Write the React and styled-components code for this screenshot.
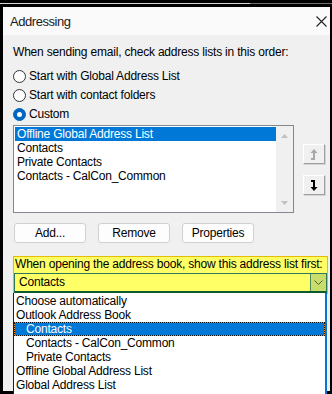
import React from "react";
import styled, { createGlobalStyle } from "styled-components";

const Global = createGlobalStyle`
  html, body { margin: 0; padding: 0; background: #000; }
  #root { width: 332px; height: 394px; overflow: hidden; }
  * { box-sizing: border-box; }
`;

const Screen = styled.div`
  width: 332px;
  height: 394px;
  background: #000;
  display: flex;
  flex-direction: column;
  overflow: hidden;
  font-family: "Liberation Sans", Arial, sans-serif;
  font-size: 12px;
  letter-spacing: -0.2px;
  color: #000;
`;

const TopStrip = styled.div`
  height: 7px;
  flex: none;
  padding-top: 3px;
`;

const TopLine = styled.div`
  height: 1px;
  background: linear-gradient(to right, #d8d8d8 0, #d8d8d8 250px, #6e6e6e 250px);
`;

const Frame = styled.div`
  flex: 1;
  display: flex;
  padding: 0 2px 3px 3px;
  min-height: 0;
`;

const Dialog = styled.div`
  flex: 1;
  background: #f0f0f0;
  display: flex;
  flex-direction: column;
  position: relative;
`;

const TitleBar = styled.div`
  height: 28px;
  flex: none;
  background: #fafafa;
  display: flex;
  align-items: center;
  justify-content: space-between;
  padding: 1px 3px 0 7px;
`;

const Title = styled.span`
  font-size: 13px;
  letter-spacing: -0.45px;
  color: #1a1a1a;
`;

const Content = styled.div`
  padding: 10px 0 0 10px;
  display: flex;
  flex-direction: column;
`;

const Intro = styled.div`
  height: 15px;
  line-height: 15px;
`;

const RadioGroup = styled.div`
  margin-top: 7px;
  display: flex;
  flex-direction: column;
  gap: 1px;
`;

const RadioRow = styled.label`
  height: 18px;
  display: flex;
  align-items: center;
  gap: 3px;
`;

const RadioCircle = styled.span`
  width: 13px;
  height: 13px;
  border-radius: 50%;
  border: 1px solid ${(p) => (p.$checked ? "#0067c0" : "#333")};
  background: ${(p) => (p.$checked ? "#0067c0" : "#fff")};
  display: flex;
  align-items: center;
  justify-content: center;
  flex: none;
`;

const RadioDot = styled.span`
  width: 5px;
  height: 5px;
  border-radius: 50%;
  background: #fff;
`;

const ListArea = styled.div`
  margin-top: 2px;
  display: flex;
  align-items: flex-start;
`;

const ListBox = styled.div`
  width: 281px;
  height: 88px;
  border: 1px solid #828790;
  background: #fff;
  display: flex;
`;

const Items = styled.div`
  flex: 1;
  padding: 1px 0 0 1px;
`;

const Item = styled.div`
  height: 14px;
  line-height: 14px;
  padding-left: 2px;
  white-space: nowrap;
  background: ${(p) => (p.$selected ? "#0078d7" : "transparent")};
  color: ${(p) => (p.$selected ? "#fff" : "#000")};
`;

const ScrollBar = styled.div`
  width: 17px;
  background: #f0f0f0;
  display: flex;
  flex-direction: column;
  justify-content: space-between;
  align-items: center;
  padding: 8px 0 7px;
`;

const MoveColumn = styled.div`
  margin-left: 9px;
  padding-top: 19px;
  display: flex;
  flex-direction: column;
  gap: 11px;
`;

const MoveButton = styled.div`
  width: 22px;
  height: 20px;
  background: #f0f0f0;
  border: 1px solid;
  border-color: #fff #a0a0a0 #a0a0a0 #fff;
  box-shadow: 1px 1px 0 #d4d4d4;
  display: flex;
  align-items: center;
  justify-content: center;
`;

const ButtonRow = styled.div`
  margin-top: 10px;
  padding-left: 1px;
  display: flex;
  gap: 12px;
`;

const Button = styled.div`
  width: 72px;
  height: 20px;
  border: 1px solid #d0d0d0;
  border-radius: 3px;
  background: #fdfdfd;
  display: flex;
  align-items: center;
  justify-content: center;
`;

const Highlight = styled.div`
  margin-top: 13px;
  width: 315px;
  border: 1px solid #e6bd00;
  background: #ffff66;
  position: relative;
`;

const HighlightLabel = styled.div`
  height: 14px;
  line-height: 14px;
  padding-left: 1px;
  white-space: nowrap;
`;

const Combo = styled.div`
  margin-top: 2px;
  height: 20px;
  border: 1px solid #2e7a57;
  border-bottom: 2px solid #0d5a2f;
  display: flex;
`;

const ComboText = styled.div`
  flex: 1;
  padding-left: 4px;
  line-height: 17px;
`;

const DropButton = styled.div`
  width: 16px;
  background: #c9de6a;
  border-left: 1px solid #4f8a5a;
  display: flex;
  align-items: center;
  justify-content: center;
`;

const DropList = styled.div`
  position: absolute;
  top: 100%;
  left: -1px;
  width: 314px;
  background: #fff;
  border-left: 1px solid #1d1d1d;
  border-right: 2px solid #0078d7;
  padding-top: 1px;
  height: 110px;
`;

const DropItem = styled.div`
  height: 14px;
  line-height: ${(p) => (p.$selected ? "12px" : "14px")};
  padding-left: ${(p) => (p.$indent ? (p.$selected ? 11 : 12) : 2)}px;
  white-space: nowrap;
  color: ${(p) => (p.$selected ? "#fff" : "#000")};
  border: ${(p) => (p.$selected ? "1px dotted #111" : "none")};
  background: ${(p) =>
    p.$selected
      ? "linear-gradient(#0078d7, #0078d7) padding-box, #ff8a1a border-box"
      : "transparent"};
`;

const Arrow = ({ up, color }) => (
  <svg width="7" height="4" viewBox="0 0 7 4">
    <path d={up ? "M0 4 L3.5 0 L7 4 Z" : "M0 0 L3.5 4 L7 0 Z"} fill={color} />
  </svg>
);

const MoveIcon = ({ up, color }) => (
  <svg width="8" height="11" viewBox="0 0 8 11">
    {up ? (
      <g fill={color}>
        <rect x="3" y="3" width="2" height="8" />
        <rect x="1" y="9" width="3" height="2" />
        <path d="M0.5 4 L4 0 L7.5 4 Z" />
      </g>
    ) : (
      <g fill={color}>
        <rect x="3" y="0" width="2" height="8" />
        <rect x="1" y="0" width="3" height="2" />
        <path d="M0.5 7 L4 11 L7.5 7 Z" />
      </g>
    )}
  </svg>
);

const CloseIcon = () => (
  <svg width="11" height="11" viewBox="0 0 11 11">
    <path d="M0.5 0.5 L10.5 10.5 M10.5 0.5 L0.5 10.5" stroke="#222" strokeWidth="1.1" />
  </svg>
);

const Chevron = () => (
  <svg width="9" height="5" viewBox="0 0 9 5">
    <path d="M0.5 0.5 L4.5 4.5 L8.5 0.5" stroke="#555" strokeWidth="1" fill="none" />
  </svg>
);

const radios = [
  { label: "Start with Global Address List", checked: false },
  { label: "Start with contact folders", checked: false },
  { label: "Custom", checked: true },
];

const lists = [
  "Offline Global Address List",
  "Contacts",
  "Private Contacts",
  "Contacts - CalCon_Common",
];

const options = [
  { label: "Choose automatically" },
  { label: "Outlook Address Book" },
  { label: "Contacts", indent: true, selected: true },
  { label: "Contacts - CalCon_Common", indent: true },
  { label: "Private Contacts", indent: true },
  { label: "Offline Global Address List" },
  { label: "Global Address List" },
];

export default function App() {
  return (
    <>
      <Global />
      <Screen>
        <TopStrip>
          <TopLine />
        </TopStrip>
        <Frame>
          <Dialog>
            <TitleBar>
              <Title>Addressing</Title>
              <CloseIcon />
            </TitleBar>
            <Content>
              <Intro>When sending email, check address lists in this order:</Intro>
              <RadioGroup>
                {radios.map((r) => (
                  <RadioRow key={r.label}>
                    <RadioCircle $checked={r.checked}>{r.checked && <RadioDot />}</RadioCircle>
                    {r.label}
                  </RadioRow>
                ))}
              </RadioGroup>
              <ListArea>
                <ListBox>
                  <Items>
                    {lists.map((l, i) => (
                      <Item key={l} $selected={i === 0}>
                        {l}
                      </Item>
                    ))}
                  </Items>
                  <ScrollBar>
                    <Arrow up color="#c2c2c2" />
                    <Arrow color="#c2c2c2" />
                  </ScrollBar>
                </ListBox>
                <MoveColumn>
                  <MoveButton>
                    <MoveIcon up color="#a8a8a8" />
                  </MoveButton>
                  <MoveButton>
                    <MoveIcon color="#000" />
                  </MoveButton>
                </MoveColumn>
              </ListArea>
              <ButtonRow>
                <Button>Add...</Button>
                <Button>Remove</Button>
                <Button>Properties</Button>
              </ButtonRow>
              <Highlight>
                <HighlightLabel>
                  When opening the address book, show this address list first:
                </HighlightLabel>
                <Combo>
                  <ComboText>Contacts</ComboText>
                  <DropButton>
                    <Chevron />
                  </DropButton>
                </Combo>
                <DropList>
                  {options.map((o) => (
                    <DropItem key={o.label} $indent={o.indent} $selected={o.selected}>
                      {o.label}
                    </DropItem>
                  ))}
                </DropList>
              </Highlight>
            </Content>
          </Dialog>
        </Frame>
      </Screen>
    </>
  );
}
